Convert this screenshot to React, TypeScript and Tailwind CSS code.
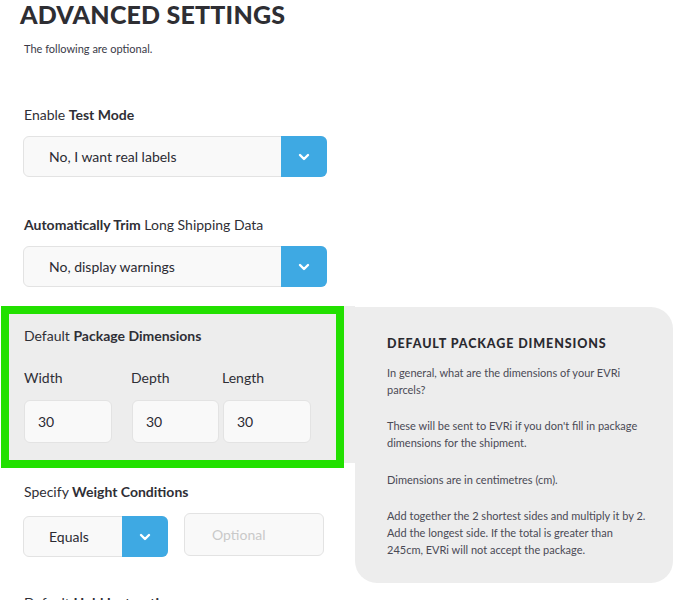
import React from 'react';

const font = { fontFamily: 'Lato, "Open Sans", sans-serif' };

const Chevron = () => (
  <svg width="12" height="8" viewBox="0 0 12 8" fill="none">
    <path d="M2 2l4 4 4-4" stroke="white" strokeWidth="2.4" strokeLinecap="round" strokeLinejoin="round" />
  </svg>
);

const Select: React.FC<{ value: string; width: string }> = ({ value, width }) => (
  <div className={`flex h-[41px] ${width} rounded-[6px] border border-[#e3e3e3] bg-[#f9f9f9]`}>
    <div className="flex flex-1 items-center pl-[25px] text-[14px] text-[#2b2b33]">{value}</div>
    <div className="-my-px -mr-px flex w-[46px] items-center justify-center rounded-r-[6px] bg-[#3ea9e3]">
      <Chevron />
    </div>
  </div>
);

const DimInput: React.FC<{ w: string }> = ({ w }) => (
  <div className={`flex h-[43px] ${w} items-center rounded-[6px] border border-[#e3e3e3] bg-[#f9f9f9] pl-[13px] text-[14px] text-[#2b2b33]`}>
    30
  </div>
);

export default function App() {
  return (
    <div className="relative h-[600px] w-[688px] overflow-hidden bg-white text-[#2f2f36]" style={font}>
      <h1 className="ml-[20px] mt-[-4px] text-[25px] font-black tracking-[0.2px] text-[#2e2e33]">ADVANCED SETTINGS</h1>
      <p className="ml-[24px] mt-[7px] text-[11px] text-[#3a3a48]">The following are optional.</p>

      <div className="ml-[24px] mt-[47px] text-[14px]">
        Enable <span className="font-bold">Test Mode</span>
      </div>
      <div className="ml-[23px] mt-[11px]">
        <Select value="No, I want real labels" width="w-[304px]" />
      </div>

      <div className="ml-[24px] mt-[37px] text-[14px]">
        <span className="font-bold">Automatically Trim</span> Long Shipping Data
      </div>
      <div className="ml-[23px] mt-[11px]">
        <Select value="No, display warnings" width="w-[304px]" />
      </div>

      <div className="mt-[19px] flex">
        <div className="w-[355px] shrink-0">
          <div className="relative ml-px h-[157px] bg-[#ededed] pl-[23px] pt-[19px]">
            <div className="text-[14px]">
              Default <span className="font-bold">Package Dimensions</span>
            </div>
            <div className="mt-[21px] flex text-[14px]">
              <div className="w-[107px]">Width</div>
              <div className="w-[91px]">Depth</div>
              <div>Length</div>
            </div>
            <div className="mt-[12px] flex">
              <div className="w-[108px]"><DimInput w="w-[88px]" /></div>
              <div className="w-[91px]"><DimInput w="w-[87px]" /></div>
              <DimInput w="w-[88px]" />
            </div>
            <div className="pointer-events-none absolute left-0 top-0 h-[162px] w-[343px] border-[8px] border-[#22e000]" />
          </div>

          <div className="ml-[24px] mt-[18px] text-[14px]">
            Specify <span className="font-bold">Weight Conditions</span>
          </div>
          <div className="ml-[23px] mt-[11px] flex items-start gap-[16px]">
            <div className="mt-[3px]">
              <Select value="Equals" width="w-[145px]" />
            </div>
            <div className="flex h-[43px] w-[140px] items-center rounded-[6px] border border-[#e3e3e3] bg-[#f9f9f9] pl-[27px] text-[14px] text-[#c9c9c9]">
              Optional
            </div>
          </div>

          <div className="ml-[24px] mt-[35px] text-[14px]">
            Default <span className="font-bold">Hold Instructions</span>
          </div>
        </div>

        <div className="mt-px h-[276px] w-[318px] rounded-[22px] rounded-tl-none bg-[#ededed] pl-[32px] pr-[24px] pt-[28px] text-[11px] leading-[17px] text-[#4a4a55]">
          <h2 className="text-[12.5px] font-black tracking-[0.9px] text-[#2a2a30]">DEFAULT PACKAGE DIMENSIONS</h2>
          <p className="mt-[12px]">In general, what are the dimensions of your EVRi parcels?</p>
          <p className="mt-[19px]">These will be sent to EVRi if you don't fill in package dimensions for the shipment.</p>
          <p className="mt-[20px]">Dimensions are in centimetres (cm).</p>
          <p className="mt-[19px]">Add together the 2 shortest sides and multiply it by 2. Add the longest side. If the total is greater than 245cm, EVRi will not accept the package.</p>
        </div>
      </div>
    </div>
  );
}
